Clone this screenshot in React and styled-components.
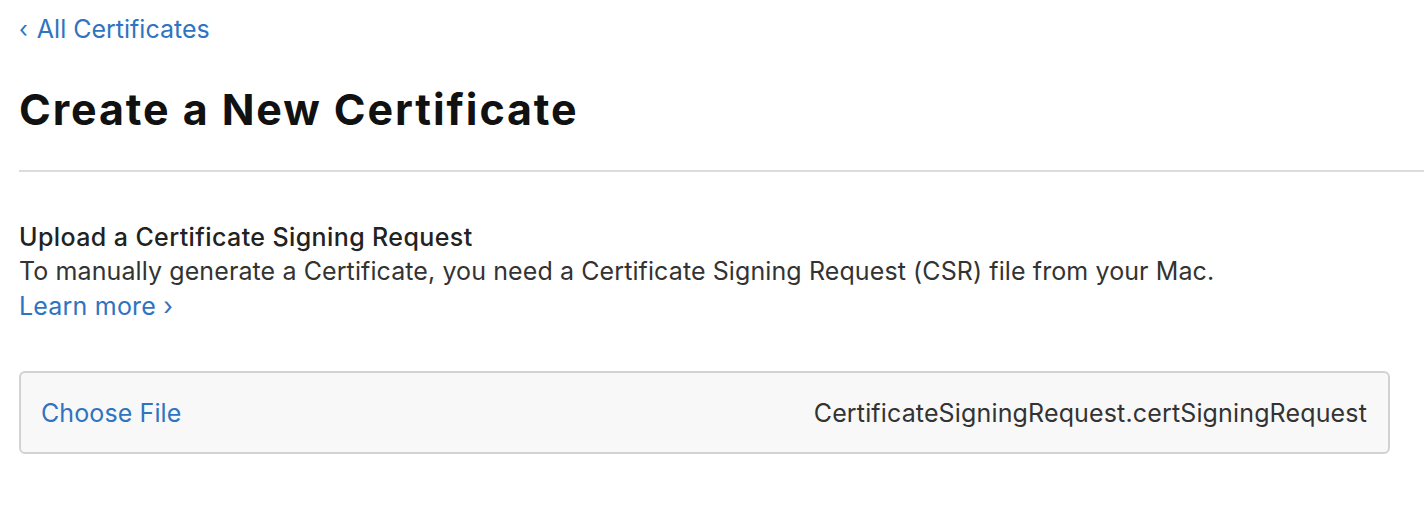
import React from 'react';
import styled, { createGlobalStyle } from 'styled-components';

const GlobalStyle = createGlobalStyle`
  html, body {
    margin: 0;
    padding: 0;
    background: #fff;
    font-family: Inter, "Noto Sans", "Liberation Sans", sans-serif;
    -webkit-font-smoothing: antialiased;
  }
`;

const Page = styled.div`
  width: 1424px;
  height: 532px;
  padding: 12px 0 0 19px;
  box-sizing: border-box;
  overflow: hidden;
`;

const BackLink = styled.a`
  display: inline-flex;
  align-items: center;
  gap: 9px;
  font-size: 25px;
  line-height: 34px;
  color: #2f74c0;
  text-decoration: none;
`;

const Chevron = styled.span`
  font-size: 23px;
`;

const Title = styled.h1`
  margin: 39px 0 0;
  font-size: 43px;
  line-height: 48px;
  font-weight: 700;
  color: #111;
  letter-spacing: 1.9px;
`;

const Divider = styled.hr`
  margin: 37px 0 0;
  border: none;
  border-top: 2px solid #dcdcdc;
`;

const Section = styled.section`
  margin-top: 48px;
  padding-right: 34px;
`;

const SectionTitle = styled.h2`
  margin: 0;
  font-size: 25px;
  line-height: 34px;
  font-weight: 500;
  color: #222;
  letter-spacing: 0.4px;
`;

const Text = styled.p`
  margin: 0;
  font-size: 25px;
  line-height: 35px;
  color: #333;
  letter-spacing: 0.1px;
`;

const Link = styled.a`
  display: inline-block;
  font-size: 25px;
  line-height: 35px;
  color: #2f74c0;
  text-decoration: none;
  letter-spacing: 0.2px;
`;

const FileBox = styled.div`
  margin-top: 47px;
  height: 83px;
  box-sizing: border-box;
  display: flex;
  align-items: center;
  justify-content: space-between;
  padding: 0 21px 0 20px;
  border: 2px solid #d2d2d2;
  border-radius: 6px;
  background: #f8f8f8;
`;

const FileButton = styled.span`
  font-size: 25px;
  color: #2f74c0;
  letter-spacing: 0.1px;
`;

const FileName = styled.span`
  font-size: 25px;
  color: #333;
  letter-spacing: 0.15px;
`;

export default function App() {
  return (
    <>
      <GlobalStyle />
      <Page>
        <BackLink href="#">
          <Chevron>‹</Chevron>All Certificates
        </BackLink>
        <Title>Create a New Certificate</Title>
        <Divider />
        <Section>
          <SectionTitle>Upload a Certificate Signing Request</SectionTitle>
          <Text>
            To manually generate a Certificate, you need a Certificate Signing Request (CSR) file from your Mac.
          </Text>
          <Link href="#">Learn more ›</Link>
          <FileBox>
            <FileButton>Choose File</FileButton>
            <FileName>CertificateSigningRequest.certSigningRequest</FileName>
          </FileBox>
        </Section>
      </Page>
    </>
  );
}
